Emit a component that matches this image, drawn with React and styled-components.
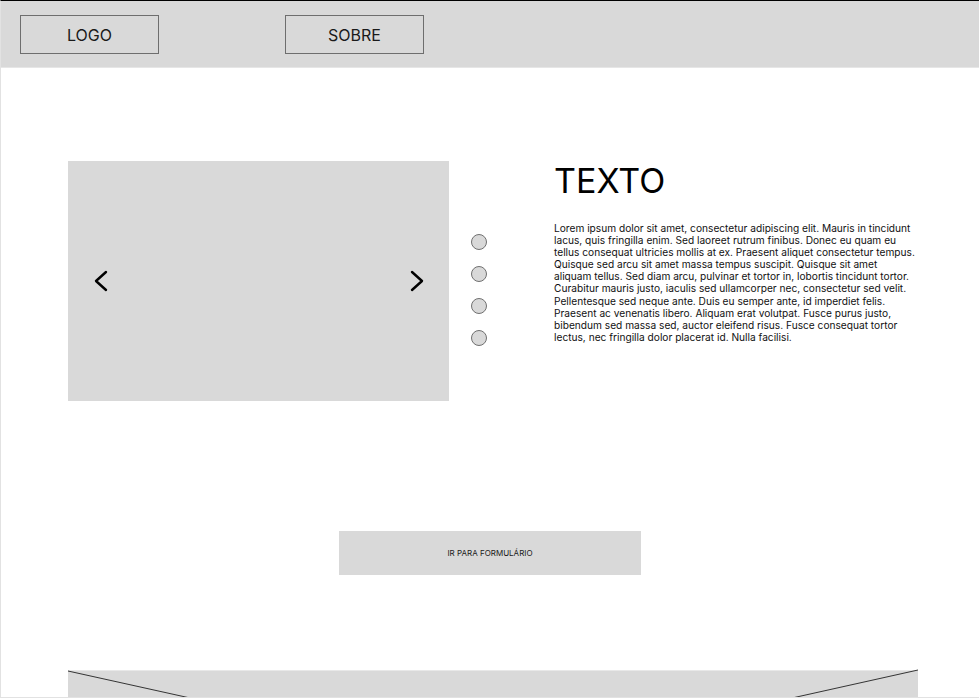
import React from 'react';
import styled, { createGlobalStyle } from 'styled-components';

const GlobalStyle = createGlobalStyle`
  * { box-sizing: border-box; }
  body {
    margin: 0;
    background: #fff;
    font-family: Inter, "Noto Sans", "Liberation Sans", sans-serif;
    color: #000;
  }
`;

const Page = styled.div`
  width: 979px;
  height: 698px;
  overflow: hidden;
  border-top: 1px solid #000;
  border-left: 1px solid #e2e2e2;
  border-bottom: 1px solid #e2e2e2;
  display: flex;
  flex-direction: column;
`;

const Header = styled.header`
  height: 67px;
  flex-shrink: 0;
  background: #d9d9d9;
  border-bottom: 1px solid #e6e6e6;
  display: flex;
  align-items: flex-start;
  gap: 126px;
  padding: 14px 19px 0;
`;

const NavButton = styled.div`
  width: 139px;
  height: 39px;
  border: 1px solid #6e6e6e;
  display: flex;
  align-items: center;
  justify-content: center;
  font-size: 16px;
  color: #1a1a1a;
`;

const Hero = styled.section`
  display: flex;
  align-items: flex-start;
  margin-top: 93px;
  padding-left: 67px;
`;

const Carousel = styled.div`
  width: 381px;
  height: 240px;
  background: #d9d9d9;
  display: flex;
  align-items: center;
  justify-content: space-between;
  padding: 0 25px 0 26px;
  flex-shrink: 0;
`;

const Dots = styled.div`
  display: flex;
  flex-direction: column;
  gap: 16px;
  margin: 73px 0 0 22px;
`;

const Dot = styled.span`
  display: block;
  width: 16px;
  height: 16px;
  border-radius: 50%;
  background: #d9d9d9;
  border: 1px solid #707070;
`;

const TextBlock = styled.div`
  margin-left: 67px;
  width: 361px;
`;

const Title = styled.h1`
  margin: 0;
  font-size: 34px;
  font-weight: 400;
  line-height: 40px;
  color: #000;
`;

const Body = styled.p`
  margin: 21px 0 0;
  font-size: 10.17px;
  line-height: 12.1px;
  color: #111;
`;

const ActionRow = styled.div`
  display: flex;
  justify-content: center;
  margin-top: 130px;
`;

const ActionButton = styled.div`
  width: 302px;
  height: 44px;
  background: #d9d9d9;
  display: flex;
  align-items: center;
  justify-content: center;
  font-size: 8px;
  color: #1a1a1a;
`;

const Banner = styled.div`
  margin: 95px 0 0 67px;
  width: 850px;
  height: 189px;
  flex-shrink: 0;
  background: #d9d9d9;
  border-top: 1px solid #e8e8e8;

  svg {
    display: block;
    width: 100%;
    height: 100%;
    overflow: visible;
  }
`;

const Chevron = ({ dir }) => (
  <svg width="14" height="22" viewBox="0 0 14 22" fill="none">
    <polyline
      points={dir === 'left' ? '12,2 2,11 12,20' : '2,2 12,11 2,20'}
      stroke="#000"
      strokeWidth="2.4"
      strokeLinecap="round"
      strokeLinejoin="round"
    />
  </svg>
);

const lorem =
  'Lorem ipsum dolor sit amet, consectetur adipiscing elit. Mauris in tincidunt lacus, quis fringilla enim. Sed laoreet rutrum finibus. Donec eu quam eu tellus consequat ultricies mollis at ex. Praesent aliquet consectetur tempus. Quisque sed arcu sit amet massa tempus suscipit. Quisque sit amet aliquam tellus. Sed diam arcu, pulvinar et tortor in, lobortis tincidunt tortor. Curabitur mauris justo, iaculis sed ullamcorper nec, consectetur sed velit. Pellentesque sed neque ante. Duis eu semper ante, id imperdiet felis. Praesent ac venenatis libero. Aliquam erat volutpat. Fusce purus justo, bibendum sed massa sed, auctor eleifend risus. Fusce consequat tortor lectus, nec fringilla dolor placerat id. Nulla facilisi.';

export default function App() {
  return (
    <>
      <GlobalStyle />
      <Page>
        <Header>
          <NavButton>LOGO</NavButton>
          <NavButton>SOBRE</NavButton>
        </Header>

        <Hero>
          <Carousel>
            <Chevron dir="left" />
            <Chevron dir="right" />
          </Carousel>
          <Dots>
            {[0, 1, 2, 3].map((i) => (
              <Dot key={i} />
            ))}
          </Dots>
          <TextBlock>
            <Title>TEXTO</Title>
            <Body>{lorem}</Body>
          </TextBlock>
        </Hero>

        <ActionRow>
          <ActionButton>IR PARA FORMULÁRIO</ActionButton>
        </ActionRow>

        <Banner>
          <svg viewBox="0 0 850 189" preserveAspectRatio="none">
            <line x1="0" y1="0" x2="850" y2="189" stroke="#333" strokeWidth="1" />
            <line x1="850" y1="-1" x2="0" y2="189" stroke="#333" strokeWidth="1" />
          </svg>
        </Banner>
      </Page>
    </>
  );
}
